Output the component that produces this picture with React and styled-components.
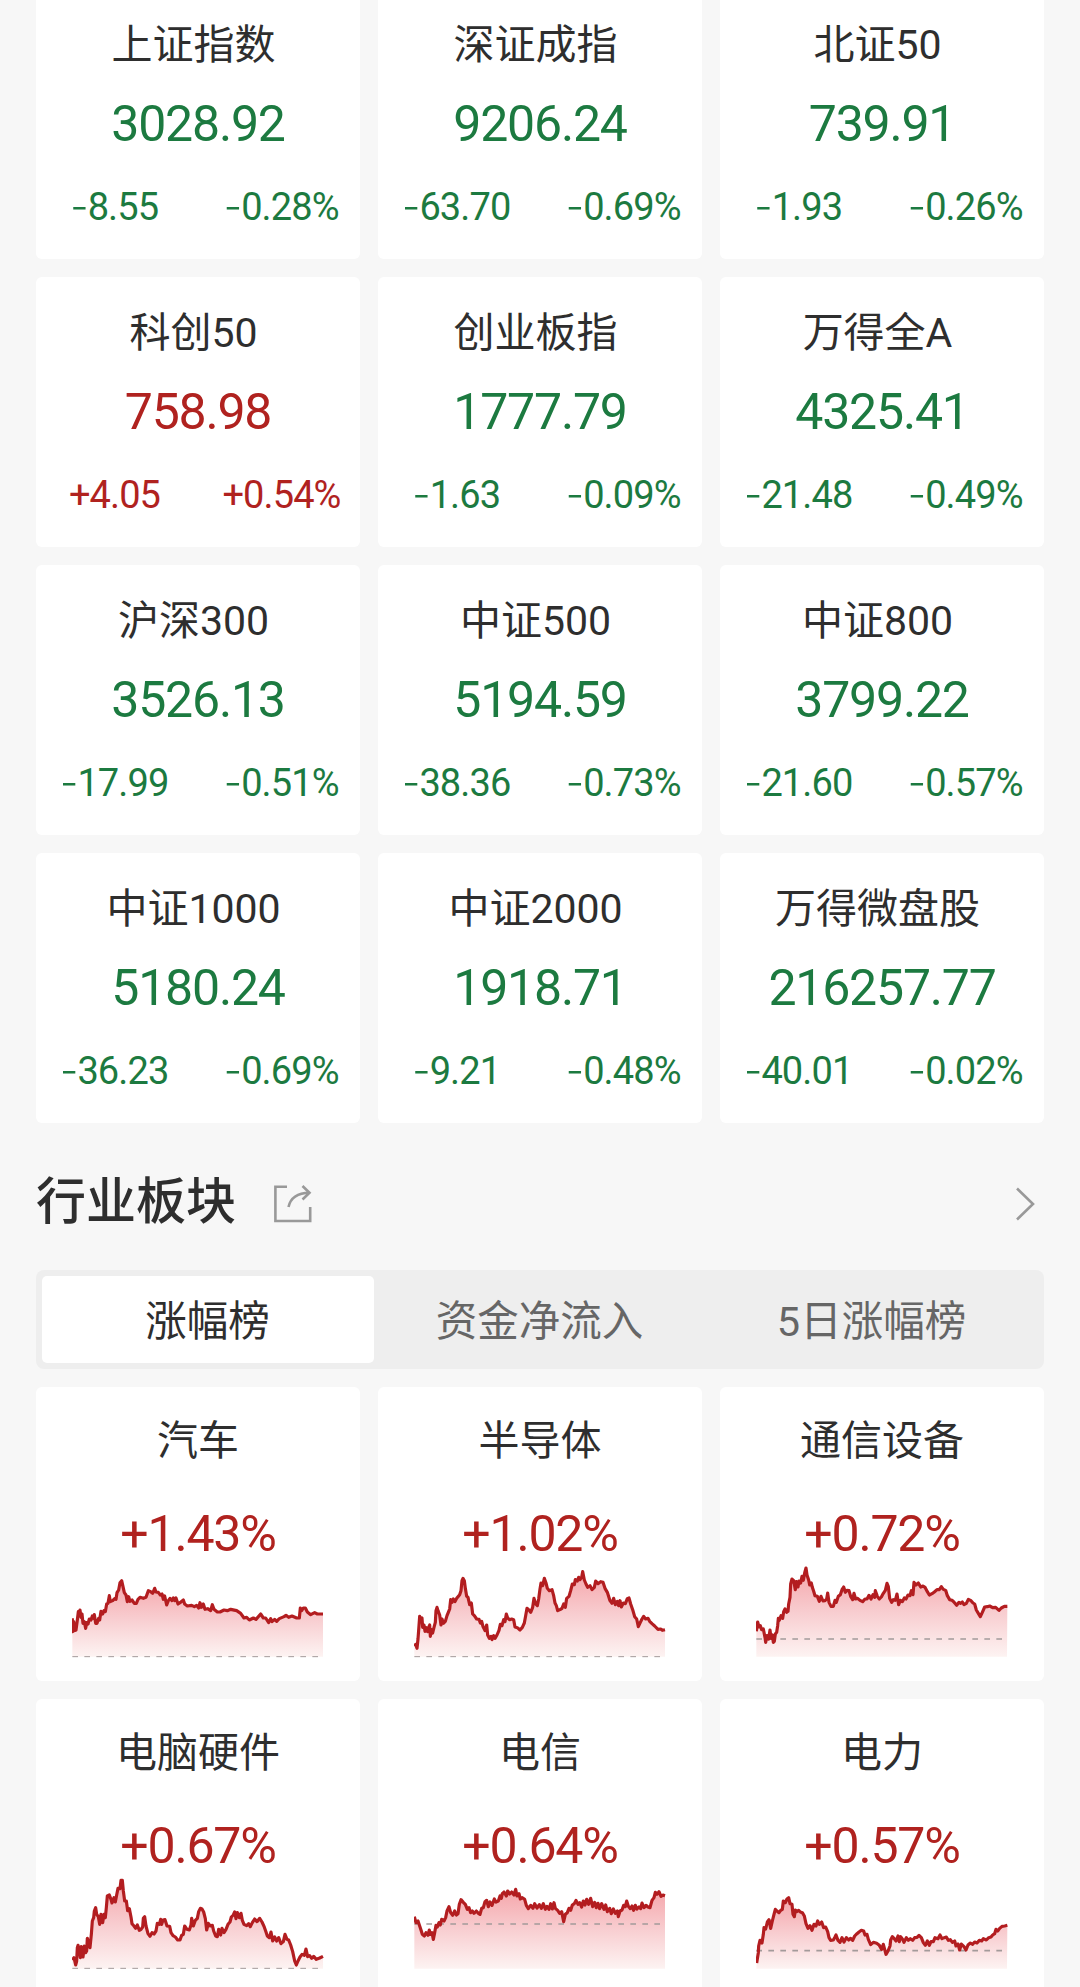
import React from "react";
import styled, { createGlobalStyle } from "styled-components";

const GREEN = "#1c7a40";
const RED = "#b0221f";

const indices = [
  { name: "上证指数", value: "3028.92", change: "-8.55", percent: "-0.28%" },
  { name: "深证成指", value: "9206.24", change: "-63.70", percent: "-0.69%" },
  { name: "北证50", value: "739.91", change: "-1.93", percent: "-0.26%" },
  { name: "科创50", value: "758.98", change: "+4.05", percent: "+0.54%" },
  { name: "创业板指", value: "1777.79", change: "-1.63", percent: "-0.09%" },
  { name: "万得全A", value: "4325.41", change: "-21.48", percent: "-0.49%" },
  { name: "沪深300", value: "3526.13", change: "-17.99", percent: "-0.51%" },
  { name: "中证500", value: "5194.59", change: "-38.36", percent: "-0.73%" },
  { name: "中证800", value: "3799.22", change: "-21.60", percent: "-0.57%" },
  { name: "中证1000", value: "5180.24", change: "-36.23", percent: "-0.69%" },
  { name: "中证2000", value: "1918.71", change: "-9.21", percent: "-0.48%" },
  { name: "万得微盘股", value: "216257.77", change: "-40.01", percent: "-0.02%" }
];

const tabs = ["涨幅榜", "资金净流入", "5日涨幅榜"];

// points are in the 756 x 300 space of the chart, base is the previous close
const sectors = [
  {
    name: "汽车",
    percent: "+1.43%",
    base: 293,
    points:
      "1,178 2,218 5,188 8,215 12,213 16,183 19,158 21,171 24,153 27,175 30,165 33,193 37,188 41,208 44,191 48,195 52,180 57,183 61,171 65,178 67,167 71,193 75,193 80,178 83,183 87,157 92,165 96,155 100,158 104,135 108,133 112,110 115,128 122,125 128,119 132,121 135,101 140,93 144,71 149,65 153,83 157,101 162,108 166,128 170,113 174,127 180,123 187,133 193,133 198,121 204,115 214,118 222,115 229,95 236,98 242,103 248,88 252,99 259,100 265,108 270,105 274,121 278,111 284,138 289,125 294,118 300,125 304,117 308,125 312,117 318,135 324,131 334,123 338,135 346,141 359,139 367,143 374,139 380,147 384,131 388,145 394,135 399,151 407,149 416,155 421,137 426,151 436,159 444,159 456,153 466,155 476,151 494,155 506,163 516,177 524,175 532,183 544,177 552,181 566,165 574,177 581,177 590,191 596,179 600,188 608,181 614,187 622,179 636,173 642,169 650,175 660,171 674,177 682,177 685,147 689,155 694,147 700,147 706,159 716,167 728,161 736,165 753,165"
  },
  {
    name: "半导体",
    percent: "+1.02%",
    base: 293,
    points:
      "1,262 5,256 9,268 12,240 15,200 17,172 20,186 24,177 26,205 30,198 33,217 37,206 41,218 44,205 47,198 49,232 52,212 56,222 60,205 64,190 66,155 69,145 72,155 77,168 81,198 84,180 88,193 94,187 99,170 103,160 107,150 110,122 114,130 118,120 123,128 128,118 132,113 137,107 141,95 144,65 147,58 151,65 154,88 158,112 162,115 167,137 172,132 176,165 181,170 188,180 195,181 199,192 203,187 207,203 213,215 218,198 221,228 226,238 231,232 234,242 239,230 243,238 249,228 255,214 259,196 264,200 269,182 273,188 277,165 281,177 287,182 293,180 299,182 303,204 310,206 318,213 325,205 331,192 335,170 339,148 344,152 350,160 356,145 360,118 365,135 370,140 374,120 378,90 381,72 386,80 391,58 396,72 400,88 406,95 414,92 419,110 423,132 427,140 431,155 438,152 444,148 449,135 454,145 458,118 465,112 470,95 475,75 481,77 484,62 490,66 494,55 498,62 503,55 506,38 511,63 516,75 521,85 528,80 534,92 541,85 545,66 552,74 560,68 567,70 573,88 580,100 588,125 594,133 599,118 604,137 610,127 614,140 618,125 622,144 628,132 634,134 640,119 645,117 650,135 656,152 662,173 668,180 673,203 679,190 684,180 689,172 695,180 702,178 707,187 714,194 722,201 732,211 740,210 745,214 753,212"
  },
  {
    name: "通信设备",
    percent: "+0.72%",
    base: 240,
    points:
      "1,217 5,189 9,204 13,200 17,212 22,210 27,235 29,250 33,230 38,240 42,213 45,238 49,228 52,250 55,247 58,225 62,220 65,200 67,178 70,184 75,170 80,178 83,158 87,150 92,160 96,157 98,135 102,115 104,75 108,60 113,65 118,92 121,68 126,84 129,66 134,72 138,52 142,64 146,42 150,27 153,48 158,63 161,78 166,72 169,85 173,97 177,110 184,112 190,127 195,112 201,126 207,125 212,120 215,102 219,130 225,142 232,142 237,124 241,130 247,112 253,107 258,92 263,84 268,100 273,94 279,95 284,112 290,122 294,103 299,120 305,118 312,124 320,128 327,120 333,120 339,109 345,120 351,107 356,115 358,95 364,112 370,120 376,114 382,103 388,94 393,73 397,83 401,118 407,130 412,122 418,124 423,105 428,137 433,124 439,128 445,117 450,120 456,108 462,110 466,95 471,107 474,70 480,78 487,72 494,84 501,81 507,85 514,98 520,108 528,104 535,99 543,92 550,92 556,83 562,91 569,94 574,110 581,122 588,124 593,128 602,139 609,130 614,133 619,129 624,137 631,133 637,121 645,125 651,132 656,135 661,153 667,163 673,173 679,160 686,144 694,143 701,141 710,146 719,145 729,154 736,147 745,142 754,142"
  },
  {
    name: "电脑硬件",
    percent: "+0.67%",
    base: 292,
    points:
      "1,267 6,260 11,282 14,270 16,230 18,223 22,235 25,260 28,227 33,258 37,225 41,245 44,240 46,202 50,215 54,230 58,190 61,150 65,140 67,120 71,110 74,130 79,137 83,160 87,130 92,155 96,130 100,140 103,110 106,75 112,72 117,85 120,96 126,80 130,93 134,72 138,52 144,53 147,28 151,28 154,60 158,90 163,90 167,119 172,113 177,138 180,158 186,165 191,172 196,162 202,178 207,175 212,168 214,142 218,137 222,165 228,188 234,196 240,185 246,189 252,180 256,157 262,160 266,145 269,160 273,147 279,146 285,165 293,166 297,185 303,194 310,198 317,207 324,207 329,193 334,190 338,165 345,175 352,177 357,162 359,142 364,165 370,148 376,142 380,122 385,112 390,114 395,123 400,143 404,177 409,157 415,165 421,163 425,180 431,195 436,197 440,175 446,192 450,172 456,185 462,175 468,160 474,153 478,138 484,132 488,123 492,143 496,125 502,140 507,127 511,148 516,160 524,164 530,158 535,167 541,155 548,144 555,152 563,142 570,153 576,166 581,180 586,195 592,200 597,183 602,210 608,198 614,210 620,200 627,218 634,212 639,190 645,205 650,207 656,222 662,242 668,270 673,282 678,270 684,258 690,250 697,253 702,234 707,257 713,254 719,262 725,256 733,265 743,261 753,256"
  },
  {
    name: "电信",
    percent: "+0.64%",
    base: 159,
    points:
      "1,137 6,155 12,150 17,165 21,177 25,190 31,195 36,185 42,193 46,177 49,190 54,185 58,205 62,185 66,163 70,168 75,155 79,162 83,145 90,150 95,140 99,120 105,107 110,125 116,133 122,120 127,132 132,128 136,100 141,86 148,94 154,100 160,115 165,110 170,125 175,120 180,127 187,120 193,127 198,130 203,112 208,110 213,92 218,88 223,107 228,93 234,103 241,84 246,93 253,90 258,75 262,82 265,68 270,63 277,75 281,60 287,69 293,63 300,72 305,55 309,75 315,68 319,84 325,80 332,85 337,103 343,113 350,103 357,112 362,98 369,111 376,101 382,112 388,98 394,115 399,106 405,115 410,98 415,114 420,95 424,112 431,118 437,127 443,122 449,152 454,130 460,125 465,112 470,118 475,102 481,98 486,88 492,100 497,95 503,108 508,90 513,102 518,85 524,100 530,82 536,107 542,94 547,110 552,97 557,113 563,98 570,115 575,102 580,122 587,112 592,128 598,114 604,127 610,120 613,137 618,120 624,117 629,103 634,107 638,90 643,106 649,113 654,105 659,118 664,103 669,114 675,108 680,113 684,96 690,110 696,103 702,108 708,110 714,88 720,80 724,64 729,70 735,62 741,76 747,72 753,74"
  },
  {
    name: "电力",
    percent: "+0.57%",
    base: 239,
    points:
      "2,276 7,245 8,225 12,208 18,216 22,190 24,170 29,174 34,153 39,146 44,172 49,150 54,130 58,115 63,120 69,125 74,118 79,115 82,90 88,95 93,84 98,80 102,98 108,100 111,130 115,137 118,117 122,122 128,118 133,123 139,125 145,135 150,158 156,172 162,164 168,178 174,160 180,165 185,150 190,160 197,153 203,170 209,168 215,182 219,200 224,208 232,207 237,198 240,192 246,208 252,214 258,200 264,213 271,200 278,207 284,202 290,208 296,195 303,188 309,183 316,178 323,180 327,192 333,190 337,205 344,221 352,214 362,217 370,223 377,235 382,220 390,250 396,240 402,225 404,207 409,197 414,202 420,210 426,195 430,212 434,197 440,205 444,214 451,200 457,208 463,203 470,208 476,200 483,199 489,193 496,200 502,215 508,223 514,210 520,223 525,212 532,212 537,200 546,203 552,192 558,203 565,200 571,198 577,208 583,206 589,214 596,210 600,225 606,219 611,237 616,219 624,227 630,237 636,222 643,216 650,220 656,213 663,216 670,208 677,210 682,203 691,207 698,200 705,198 710,192 716,188 720,175 725,180 731,172 738,166 746,165 754,163"
  }
];

const GlobalStyle = createGlobalStyle`
  * {
    box-sizing: border-box;
  }
  body {
    margin: 0;
    background: #f7f7f7;
    color: #2e2e2e;
    font-family: Roboto, "Noto Sans CJK SC", sans-serif;
  }
`;

const Page = styled.main`
  width: 1080px;
  height: 1987px;
  padding: 0 36px;
  overflow: hidden;
`;

const Grid = styled.div`
  display: grid;
  grid-template-columns: repeat(3, 1fr);
  grid-auto-rows: ${props => props.$rowHeight}px;
  gap: 18px;
`;

/* the list is scrolled a little, so its first row is cut by the top edge */
const IndexGrid = styled(Grid)`
  margin-top: -11px;
`;

const Card = styled.div`
  display: flex;
  flex-direction: column;
  align-items: center;
  padding-top: ${props => props.$top}px;
  background: #fff;
  border-radius: 6px;
`;

const Name = styled.div`
  height: 60px;
  line-height: 60px;
  font-size: 41px;
  white-space: nowrap;
`;

const IndexName = styled(Name)`
  padding-right: 9px;
`;

const Value = styled.div`
  height: 60px;
  margin-top: ${props => props.$gap}px;
  line-height: 60px;
  font-size: 50px;
  letter-spacing: -1.2px;
  color: ${props => (props.$up ? RED : GREEN)};
`;

const Changes = styled.div`
  display: grid;
  grid-template-columns: 1fr 1fr;
  column-gap: 10px;
  width: 100%;
  margin-top: 28px;
  line-height: 50px;
  font-size: 38px;
  letter-spacing: -0.9px;
  text-align: center;
  white-space: nowrap;
  color: ${props => (props.$up ? RED : GREEN)};
`;

const Minus = styled.span`
  margin-right: 1px;
  font-family: "Noto Sans CJK SC", sans-serif;
  font-size: 50px;
  font-weight: 300;
  line-height: 0;
  vertical-align: -2px;
`;

const SectionHeader = styled.header`
  display: flex;
  align-items: center;
  height: 147px;
  padding: 14px 9px 0 0;
`;

const Title = styled.h2`
  margin: -3px 38px 0 0;
  font-size: 50px;
  font-weight: 500;
  line-height: 60px;
`;

const ChevronIcon = styled.svg`
  margin-left: auto;
`;

const Tabs = styled.div`
  display: flex;
  height: 99px;
  margin-bottom: 18px;
  padding: 6px;
  background: #eee;
  border-radius: 8px;
`;

const Tab = styled.button`
  flex: 1;
  padding: 0 1px 3px 0;
  border: 0;
  border-radius: 5px;
  background: ${props => (props.$active ? "#fff" : "transparent")};
  color: ${props => (props.$active ? "#2e2e2e" : "#666")};
  font-family: inherit;
  font-size: 41.5px;
`;

const Chart = styled.svg`
  display: block;
  width: 252px;
  height: 100px;
  margin-top: -5px;
`;

const Signed = ({ text }) =>
  text[0] === "-" ? (
    <span>
      <Minus>-</Minus>
      {text.slice(1)}
    </span>
  ) : (
    <span>{text}</span>
  );

const IndexCard = ({ item }) => {
  const up = item.change[0] === "+";
  return (
    <Card $top={26}>
      <IndexName>{item.name}</IndexName>
      <Value $up={up} $gap={19}>
        {item.value}
      </Value>
      <Changes $up={up}>
        <Signed text={item.change} />
        <Signed text={item.percent} />
      </Changes>
    </Card>
  );
};

const Sparkline = ({ id, points, base }) => (
  <Chart viewBox="0 0 756 300">
    <defs>
      <linearGradient id={id} x1="0" y1="0" x2="0" y2="1">
        <stop offset="0" stopColor="#f5a5aa" />
        <stop offset="0.5" stopColor="#f8cdd0" />
        <stop offset="1" stopColor="#fdf3f2" />
      </linearGradient>
    </defs>
    <polygon points={`1,293 ${points} 753,293`} fill={`url(#${id})`} />
    <line
      x1="1"
      x2="753"
      y1={base}
      y2={base}
      stroke="#a39a9a"
      strokeWidth={base > 290 ? 3 : 5}
      strokeDasharray="17 19"
    />
    <polyline
      points={points}
      fill="none"
      stroke="#b31d20"
      strokeWidth="9.5"
      strokeLinejoin="round"
    />
  </Chart>
);

const SectorCard = ({ item, id }) => (
  <Card $top={24}>
    <Name>{item.name}</Name>
    <Value $up $gap={33}>
      {item.percent}
    </Value>
    <Sparkline id={id} points={item.points} base={item.base} />
  </Card>
);

const App = () => (
  <>
    <GlobalStyle />
    <Page>
      <IndexGrid $rowHeight={270}>
        {indices.map(item => (
          <IndexCard key={item.name} item={item} />
        ))}
      </IndexGrid>

      <SectionHeader>
        <Title>行业板块</Title>
        <svg width="38" height="38" fill="none" stroke="#999" strokeWidth="2.6">
          <path d="M13 1.8H1.4V36H36.2V22" />
          <path d="M14.5 22C16.5 13 24 8 35.5 7.8M28.5 1L35.5 7.8L28.5 14.5" />
        </svg>
        <ChevronIcon width="20" height="34" fill="none" stroke="#999" strokeWidth="2.6">
          <path d="M2 1.5L18 17L2 32.5" />
        </ChevronIcon>
      </SectionHeader>

      <Tabs>
        {tabs.map((tab, i) => (
          <Tab key={tab} $active={i === 0}>
            {tab}
          </Tab>
        ))}
      </Tabs>

      <Grid $rowHeight={294}>
        {sectors.map((item, i) => (
          <SectorCard key={item.name} item={item} id={`fill${i}`} />
        ))}
      </Grid>
    </Page>
  </>
);

export default App;
